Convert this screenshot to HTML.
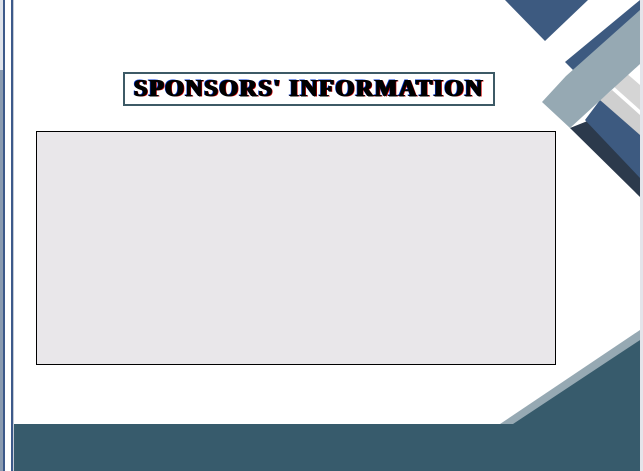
<!DOCTYPE html>
<html><head><style>
body{margin:0;width:643px;height:471px;overflow:hidden;background:#fff;position:relative;font-family:"Liberation Serif",serif}
.a{position:absolute}
.title{left:123px;top:72px;width:368px;height:30px;border:2px solid #3d5a66;background:#fff}
.title span{position:absolute;left:0;right:0;top:2px;text-align:center;font-size:24px;font-weight:bold;letter-spacing:1.6px;color:#000;white-space:nowrap;text-shadow:1px 0 0 #000,-1px 0 0 #000,0 0.6px 0 #000,1.6px 0.5px 0 #c00,-1.6px -0.5px 0 #03c}
.box{left:36px;top:131px;width:518px;height:232px;background:#e9e7ea;border:1px solid #000}
</style></head><body>
<svg class="a" style="left:0;top:0" width="643" height="471">
<rect x="0" y="0" width="3" height="471" fill="#dfe3ea"/>
<rect x="0" y="70" width="3" height="401" fill="#8a9bb0"/>
<rect x="3" y="0" width="2" height="471" fill="#3d5a8a"/>
<rect x="11" y="0" width="2" height="471" fill="#3d5a8a"/>
<rect x="13" y="0" width="1" height="471" fill="#c5ccd6"/>
<rect x="640" y="0" width="3" height="471" fill="#e4e4ea"/>
<polygon points="505,0 588,0 545,41" fill="#3d5a80"/>
<polygon points="565,62 640,0 640,20 575,72" fill="#3d5a80"/>
<polygon points="570,128 640,197 640,175 590,120" fill="#2c3a4c"/>
<polygon points="585,120 640,178 640,130 600,100" fill="#3d5a80"/>
<polygon points="600,100 640,135 640,115 612,90" fill="#cfcfcf"/>
<polygon points="612,85 640,110 640,85 625,72" fill="#d5d5d5"/>
<polygon points="542,102 566,76 640,10 640,64 570,128" fill="#96a9b3"/>
<polygon points="500,424 640,330 640,340 515,424" fill="#96a9b3"/>
<polygon points="14,424 513,424 640,340 640,471 14,471" fill="#375b6c"/>
</svg>
<div class="a title"><span>SPONSORS' INFORMATION</span></div>
<div class="a box"></div>
</body></html>
